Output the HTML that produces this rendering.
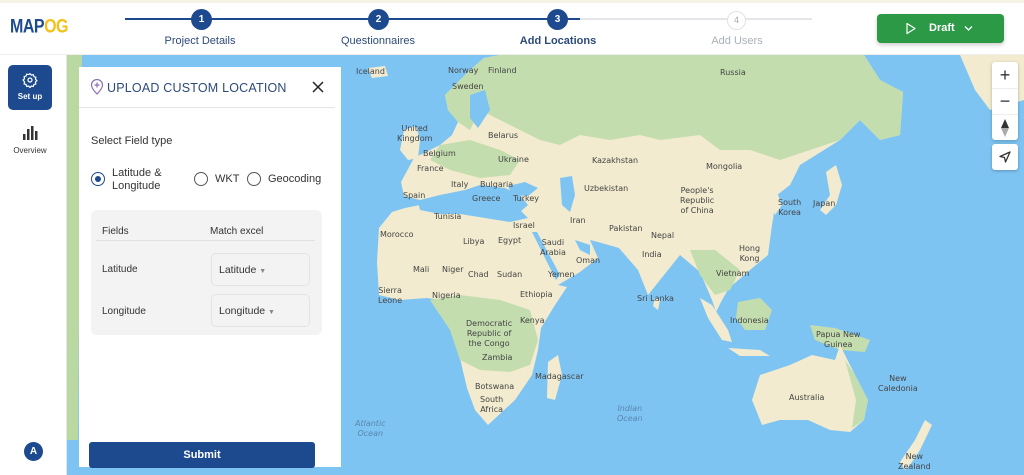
<!DOCTYPE html>
<html><head><meta charset="utf-8"><style>
*{box-sizing:border-box;margin:0;padding:0}
body{width:1024px;height:475px;overflow:hidden;position:relative;font-family:"Liberation Sans",sans-serif;background:#7ec4f3}
.abs{position:absolute}
.lbl{position:absolute;font-size:8px;color:#444;font-family:"DejaVu Sans","Liberation Sans",sans-serif;line-height:10px;text-align:center}
</style></head><body>
<svg class="abs" style="left:0;top:0" width="1024" height="475" viewBox="0 0 1024 475">
<rect x="0" y="0" width="1024" height="475" fill="#7ec4f3"/>
<polygon fill="#b9d8a2" points="67,55 82,55 80,200 78,440 67,440"/>
<polygon fill="#f2ebcf" points="484,58 500,55 864,55 880,80 903,92 900,135 880,140 860,120 840,140 800,165 790,185 777,195 772,225 768,255 750,270 729,288 722,300 716,312 712,300 700,272 680,255 668,270 648,295 638,270 619,248 598,242 590,240 598,258 580,272 558,285 567,287 555,305 541,328 538,350 532,375 515,400 488,425 475,410 467,388 458,350 453,328 453,302 440,300 427,298 400,300 379,295 377,262 379,228 392,212 405,208 420,205 440,212 470,210 505,220 520,212 528,205 520,195 505,188 480,185 465,190 440,195 420,200 404,196 401,182 414,158 440,145 452,135 458,122 448,110 445,95 470,70"/>
<polygon fill="#c3ddae" points="500,55 864,55 880,80 903,92 900,135 880,140 860,120 840,140 810,150 780,160 750,150 720,150 700,135 660,140 640,135 610,140 580,135 560,145 540,140 520,130 500,120 480,110 470,130 458,122 448,110 445,95 470,70 484,58"/>
<polygon fill="#c3ddae" points="440,145 470,140 500,150 520,160 510,175 480,178 450,170 430,160"/>
<polygon fill="#c3ddae" points="430,300 460,295 500,300 530,310 538,340 530,365 510,372 480,370 460,360 450,330"/>
<polygon fill="#c3ddae" points="690,250 715,250 740,270 730,290 715,295 700,275"/>
<polygon fill="#7ec4f3" points="418,202 440,196 470,198 498,206 520,210 528,218 510,222 485,218 460,214 440,214 420,210"/>
<polygon fill="#7ec4f3" points="508,186 525,182 538,188 528,196 512,195"/>
<polygon fill="#7ec4f3" points="560,178 572,176 575,195 570,212 562,205"/>
<polygon fill="#7ec4f3" points="532,232 537,232 560,275 556,280"/>
<polygon fill="#7ec4f3" points="575,240 590,245 590,255 580,250"/>
<polygon fill="#7ec4f3" points="470,95 485,90 490,110 478,128 470,118"/>
<polygon fill="#f2ebcf" points="404,130 416,126 420,140 418,158 408,160 400,150"/>
<polygon fill="#f2ebcf" points="368,68 385,66 388,76 372,78"/>
<polygon fill="#f2ebcf" points="548,362 558,355 562,375 555,400 547,398"/>
<polygon fill="#f2ebcf" points="655,298 660,300 658,310 653,306"/>
<polygon fill="#f2ebcf" points="826,172 836,165 842,185 836,205 826,215 820,210 830,195"/>
<polygon fill="#f2ebcf" points="700,298 712,305 728,330 732,342 722,340 708,318"/>
<polygon fill="#c3ddae" points="738,302 760,298 772,310 765,330 745,330 736,318"/>
<polygon fill="#f2ebcf" points="728,348 760,350 770,356 740,356"/>
<polygon fill="#c3ddae" points="810,325 835,328 870,340 865,352 840,350 815,340"/>
<polygon fill="#f2ebcf" points="760,375 790,365 812,355 835,360 840,345 855,375 868,400 864,420 850,432 830,430 808,420 780,420 762,425 752,400"/>
<polygon fill="#c3ddae" points="845,360 855,375 868,400 864,420 852,428 856,400"/>
<polygon fill="#f2ebcf" points="925,420 932,425 920,450 910,465 905,470 900,462 915,440"/>
<polygon fill="#f2ebcf" points="960,55 1024,55 1024,100 990,110 975,90"/>
<polygon fill="#f2ebcf" points="768,195 776,190 782,205 775,215"/>
</svg>
<div class="lbl" style="left:356px;top:67px">Iceland</div>
<div class="lbl" style="left:448px;top:66px">Norway</div>
<div class="lbl" style="left:488px;top:66px">Finland</div>
<div class="lbl" style="left:452px;top:82px">Sweden</div>
<div class="lbl" style="left:720px;top:68px">Russia</div>
<div class="lbl" style="left:397px;top:124px">United<br>Kingdom</div>
<div class="lbl" style="left:488px;top:131px">Belarus</div>
<div class="lbl" style="left:423px;top:149px">Belgium</div>
<div class="lbl" style="left:498px;top:155px">Ukraine</div>
<div class="lbl" style="left:592px;top:156px">Kazakhstan</div>
<div class="lbl" style="left:706px;top:162px">Mongolia</div>
<div class="lbl" style="left:417px;top:164px">France</div>
<div class="lbl" style="left:451px;top:180px">Italy</div>
<div class="lbl" style="left:480px;top:180px">Bulgaria</div>
<div class="lbl" style="left:584px;top:184px">Uzbekistan</div>
<div class="lbl" style="left:680px;top:186px">People's<br>Republic<br>of China</div>
<div class="lbl" style="left:403px;top:191px">Spain</div>
<div class="lbl" style="left:472px;top:194px">Greece</div>
<div class="lbl" style="left:513px;top:194px">Turkey</div>
<div class="lbl" style="left:778px;top:198px">South<br>Korea</div>
<div class="lbl" style="left:813px;top:199px">Japan</div>
<div class="lbl" style="left:434px;top:212px">Tunisia</div>
<div class="lbl" style="left:513px;top:221px">Israel</div>
<div class="lbl" style="left:570px;top:216px">Iran</div>
<div class="lbl" style="left:609px;top:224px">Pakistan</div>
<div class="lbl" style="left:380px;top:230px">Morocco</div>
<div class="lbl" style="left:463px;top:237px">Libya</div>
<div class="lbl" style="left:498px;top:236px">Egypt</div>
<div class="lbl" style="left:540px;top:238px">Saudi<br>Arabia</div>
<div class="lbl" style="left:651px;top:231px">Nepal</div>
<div class="lbl" style="left:642px;top:250px">India</div>
<div class="lbl" style="left:739px;top:244px">Hong<br>Kong</div>
<div class="lbl" style="left:576px;top:256px">Oman</div>
<div class="lbl" style="left:413px;top:265px">Mali</div>
<div class="lbl" style="left:442px;top:265px">Niger</div>
<div class="lbl" style="left:468px;top:270px">Chad</div>
<div class="lbl" style="left:497px;top:270px">Sudan</div>
<div class="lbl" style="left:548px;top:270px">Yemen</div>
<div class="lbl" style="left:716px;top:269px">Vietnam</div>
<div class="lbl" style="left:378px;top:286px">Sierra<br>Leone</div>
<div class="lbl" style="left:432px;top:291px">Nigeria</div>
<div class="lbl" style="left:520px;top:290px">Ethiopia</div>
<div class="lbl" style="left:637px;top:294px">Sri Lanka</div>
<div class="lbl" style="left:466px;top:319px">Democratic<br>Republic of<br>the Congo</div>
<div class="lbl" style="left:520px;top:316px">Kenya</div>
<div class="lbl" style="left:730px;top:316px">Indonesia</div>
<div class="lbl" style="left:816px;top:330px">Papua New<br>Guinea</div>
<div class="lbl" style="left:482px;top:353px">Zambia</div>
<div class="lbl" style="left:535px;top:372px">Madagascar</div>
<div class="lbl" style="left:878px;top:374px">New<br>Caledonia</div>
<div class="lbl" style="left:475px;top:382px">Botswana</div>
<div class="lbl" style="left:480px;top:395px">South<br>Africa</div>
<div class="lbl" style="left:789px;top:393px">Australia</div>
<div class="lbl" style="left:617px;top:404px;color:#5a86b0;font-style:italic">Indian<br>Ocean</div>
<div class="lbl" style="left:355px;top:419px;color:#5a86b0;font-style:italic">Atlantic<br>Ocean</div>
<div class="lbl" style="left:898px;top:452px">New<br>Zealand</div>

<div class="abs" style="left:992px;top:62px;width:26px;height:78px;background:#fff;border-radius:3px;box-shadow:0 1px 3px rgba(0,0,0,.25)">
<div style="height:26px;text-align:center;font-size:18px;line-height:26px;color:#333">+</div>
<div style="height:26px;text-align:center;font-size:18px;line-height:24px;color:#333;border-top:1px solid #eee">−</div>
<div style="height:26px;border-top:1px solid #eee;text-align:center"><svg width="10" height="20" viewBox="0 0 10 20" style="margin-top:3px"><polygon points="5,1 9,10 1,10" fill="#333"/><polygon points="5,19 9,10 1,10" fill="#aaa"/></svg></div>
</div>
<div class="abs" style="left:992px;top:144px;width:26px;height:26px;background:#fff;border-radius:3px;box-shadow:0 1px 3px rgba(0,0,0,.25)">
<svg width="26" height="26" viewBox="0 0 26 26"><polygon points="18,8 8,12.5 12.5,13.5 13.5,18" fill="none" stroke="#333" stroke-width="1.3" stroke-linejoin="round"/></svg>
</div>

<div class="abs" style="left:0;top:0;width:1024px;height:55px;background:#fff;border-top:3px solid #f6f2e4;border-bottom:1px solid #eee"></div>
<div class="abs" style="left:10px;top:17px;font-size:16px;font-weight:bold;color:#1d4a8f;letter-spacing:-0.5px;transform:scaleY(1.2);transform-origin:left top">MAP<span style="color:#f2c21b">OG</span></div>
<div class="abs" style="left:125px;top:18px;width:455px;height:2px;background:#1d4a8f"></div>
<div class="abs" style="left:580px;top:18px;width:232px;height:2px;background:#e4e6ea"></div>
<div class="abs" style="left:191px;top:9px;width:21px;height:21px;border-radius:50%;background:#1d4a8f;color:#fff;font-size:10px;font-weight:bold;text-align:center;line-height:21px">1</div>
<div class="abs" style="left:368px;top:9px;width:21px;height:21px;border-radius:50%;background:#1d4a8f;color:#fff;font-size:10px;font-weight:bold;text-align:center;line-height:21px">2</div>
<div class="abs" style="left:547px;top:9px;width:21px;height:21px;border-radius:50%;background:#1d4a8f;color:#fff;font-size:10px;font-weight:bold;text-align:center;line-height:21px">3</div>
<div class="abs" style="left:727px;top:11px;width:19px;height:19px;border-radius:50%;background:#fff;border:1.5px solid #dfe2e7;color:#aaa;font-size:9px;text-align:center;line-height:16px">4</div>
<div class="abs" style="left:140px;top:35px;width:120px;text-align:center;font-size:11px;color:#2d4a7a">Project Details</div>
<div class="abs" style="left:318px;top:35px;width:120px;text-align:center;font-size:11px;color:#2d4a7a">Questionnaires</div>
<div class="abs" style="left:498px;top:35px;width:120px;text-align:center;font-size:11px;color:#2d4a7a;font-weight:bold">Add Locations</div>
<div class="abs" style="left:677px;top:35px;width:120px;text-align:center;font-size:11px;color:#a9b0bb">Add Users</div>
<div class="abs" style="left:877px;top:14px;width:127px;height:29px;background:#2b9946;border-radius:4px;box-shadow:0 2px 4px rgba(0,0,0,.2);color:#fff;font-size:11px;font-weight:bold">
<svg class="abs" style="left:28px;top:8px" width="12" height="13" viewBox="0 0 12 13"><polygon points="2,1.5 10,6.5 2,11.5" fill="none" stroke="#fff" stroke-width="1.2" stroke-linejoin="round"/></svg>
<span class="abs" style="left:52px;top:8px">Draft</span>
<svg class="abs" style="left:87px;top:11px" width="9" height="7" viewBox="0 0 9 7"><polyline points="1,1.5 4.5,5 8,1.5" fill="none" stroke="#fff" stroke-width="1.3"/></svg>
</div>

<div class="abs" style="left:0;top:55px;width:67px;height:420px;background:#fff;border-right:1px solid #e6e6e6"></div>
<div class="abs" style="left:8px;top:65px;width:44px;height:45px;background:#1d4a8f;border-radius:5px;color:#fff;font-size:8px;font-weight:bold;text-align:center">
<svg style="margin-top:7px" width="16" height="16" viewBox="0 0 24 24" fill="none" stroke="#fff" stroke-width="1.8"><circle cx="12" cy="12" r="3"/><path d="M12 2.5l2 2.2 3-.6.9 2.9 2.9.9-.6 3 2.2 2-2.2 2 .6 3-2.9.9-.9 2.9-3-.6-2 2.2-2-2.2-3 .6-.9-2.9-2.9-.9.6-3L1.6 12l2.2-2-.6-3 2.9-.9.9-2.9 3 .6z"/></svg>
<div style="margin-top:2px">Set up</div></div>
<svg class="abs" style="left:22px;top:125px" width="16" height="16" viewBox="0 0 16 16" fill="#333"><rect x="1" y="9" width="2.5" height="6"/><rect x="5" y="4" width="2.5" height="11"/><rect x="9" y="1" width="2.5" height="14"/><rect x="13" y="6" width="2.5" height="9"/></svg>
<div class="abs" style="left:0;top:146px;width:60px;text-align:center;font-size:8px;color:#333">Overview</div>
<div class="abs" style="left:24px;top:442px;width:19px;height:19px;border-radius:50%;background:#1d4a8f;color:#fff;font-size:10px;font-weight:bold;text-align:center;line-height:19px">A</div>

<div class="abs" style="left:79px;top:67px;width:262px;height:400px;background:#fff"></div>
<svg class="abs" style="left:90px;top:79px" width="14" height="16" viewBox="0 0 14 16" fill="none" stroke="#8a6fb0" stroke-width="1.2"><path d="M7 15C3 11 1.5 8.5 1.5 6a5.5 5.5 0 0 1 11 0c0 2.5-1.5 5-5.5 9z"/><path d="M7 3.5v5M4.5 6h5"/></svg>
<div class="abs" style="left:107px;top:81px;font-size:12.5px;color:#2d4a7a;letter-spacing:.2px">UPLOAD CUSTOM LOCATION</div>
<svg class="abs" style="left:312px;top:81px" width="12" height="12" viewBox="0 0 12 12" stroke="#222" stroke-width="1.5"><path d="M1 1l10 10M11 1L1 11"/></svg>
<div class="abs" style="left:79px;top:107px;width:256px;height:1px;background:#e5e5e5"></div>
<div class="abs" style="left:91px;top:135px;font-size:11px;color:#333">Select Field type</div>
<div class="abs" style="left:91px;top:172px;width:14px;height:14px;border-radius:50%;border:1.5px solid #1d4a8f"><div style="margin:2.5px;width:6px;height:6px;border-radius:50%;background:#1d4a8f"></div></div>
<div class="abs" style="left:112px;top:167px;font-size:11px;color:#333;line-height:13px">Latitude &amp;<br>Longitude</div>
<div class="abs" style="left:194px;top:172px;width:14px;height:14px;border-radius:50%;border:1.5px solid #555"></div>
<div class="abs" style="left:215px;top:173px;font-size:11px;color:#333">WKT</div>
<div class="abs" style="left:247px;top:172px;width:14px;height:14px;border-radius:50%;border:1.5px solid #555"></div>
<div class="abs" style="left:268px;top:173px;font-size:11px;color:#333">Geocoding</div>
<div class="abs" style="left:91px;top:210px;width:231px;height:125px;background:#f3f3f3;border-radius:6px"></div>
<div class="abs" style="left:102px;top:226px;font-size:10px;color:#333">Fields</div>
<div class="abs" style="left:210px;top:226px;font-size:10px;color:#333">Match excel</div>
<div class="abs" style="left:96px;top:240px;width:219px;height:1px;background:#e0e0e0"></div>
<div class="abs" style="left:102px;top:264px;font-size:10px;color:#333">Latitude</div>
<div class="abs" style="left:102px;top:306px;font-size:10px;color:#333">Longitude</div>
<div class="abs" style="left:211px;top:253px;width:99px;height:33px;border:1px solid #e3e3e3;border-radius:5px;font-size:10.5px;color:#333;padding:10px 0 0 7px">Latitude <span style="font-size:7px;color:#888">▼</span></div>
<div class="abs" style="left:211px;top:294px;width:99px;height:33px;border:1px solid #e3e3e3;border-radius:5px;font-size:10.5px;color:#333;padding:10px 0 0 7px">Longitude <span style="font-size:7px;color:#888">▼</span></div>
<div class="abs" style="left:89px;top:442px;width:226px;height:26px;background:#1d4a8f;border-radius:3px;color:#fff;font-size:11px;font-weight:bold;text-align:center;line-height:26px">Submit</div>
</body></html>
